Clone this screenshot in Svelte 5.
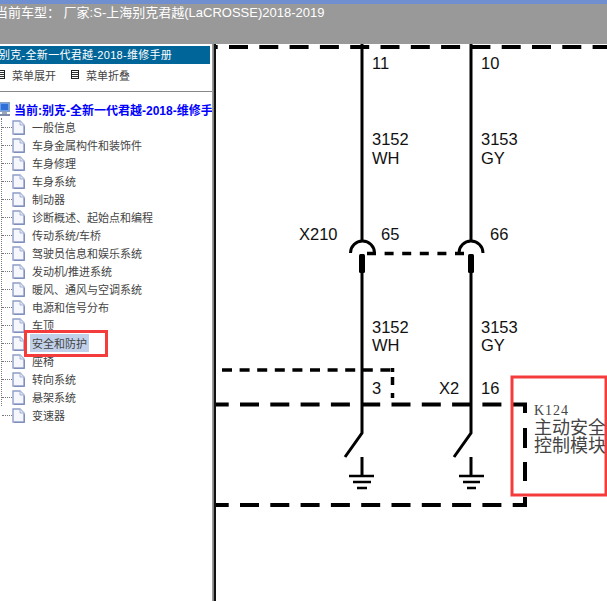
<script>
    const items = ['一般信息', '车身金属构件和装饰件', '车身修理', '车身系统', '制动器', '诊断概述、起始点和编程', '传动系统/车桥', '驾驶员信息和娱乐系统', '发动机/推进系统', '暖风、通风与空调系统', '电源和信号分布', '车顶', '安全和防护', '座椅', '转向系统', '悬架系统', '变速器'];
    const selected = '安全和防护';
</script>

<div class="window">
    <header>
        <p>当前车型： 厂家:S-上海别克君越(LaCROSSE)2018-2019</p>
    </header>
    <main>
        <aside>
            <div class="title">别克-全新一代君越-2018-维修手册</div>
            <div class="tools">
                <span class="tool"><i class="box"></i>菜单展开</span>
                <span class="tool"><i class="box"></i>菜单折叠</span>
            </div>
            <div class="current">
                <svg width="14" height="16" viewBox="0 0 14 16">
                    <rect x="2.500" y="1.500" width="10" height="9" fill="#6f9fe8" stroke="#8aa0c0"/>
                    <rect x="4" y="3" width="7" height="6" fill="#2f6fd8"/>
                    <path d="M5 11V13H10V11Z" fill="#9aa8b8"/>
                    <rect x="1" y="13" width="12" height="2" fill="#7a8aa8"/>
                </svg>
                <b>当前:别克-全新一代君越-2018-维修手册</b>
            </div>
            <ul>
                {#each items as item}
                    <li>
                        <span class="dots"></span>
                        <svg class="doc" width="13" height="15" viewBox="0 0 13 15">
                            <path d="M1 1H8L12 5V14H1Z" fill="#f5f7fd" stroke="#8f9dc8" stroke-width="1.400"/>
                            <path d="M8 1V5H12" fill="#dfe6f5" stroke="#a6b2d4"/>
                            <path d="M2 14.500H12.500V6" fill="none" stroke="#7f8fbc"/>
                        </svg>
                        <span class="label" class:selected={item === selected}>{item}</span>
                    </li>
                {/each}
            </ul>
            <div class="marker"></div>
        </aside>
        <div class="divider"></div>
        <section class="diagram">
            <svg width="391" height="557" viewBox="216 44 391 557">
                <g class="heavy" fill="none">
                    <path class="top" d="M216 47H607"/>
                    <path class="rail" d="M216 404.500H527"/>
                    <path class="rail" d="M216 505H527"/>
                </g>
                <path class="side" d="M525 403V413M525 428V448M525 462V481M525 497V507"/>
                <path class="small-dash" d="M222 370H392"/>
                <path class="side thin" d="M392.500 368V372M392.500 377V385M392.500 393V398"/>
                <path class="joint-dash" d="M367 253.500H464"/>
                <g class="wire" fill="none">
                    <path d="M362 44V241"/>
                    <path d="M471 44V241"/>
                    <path d="M362 272V433L345 457"/>
                    <path d="M471 272V433L454 457"/>
                    <path d="M362 457V476"/>
                    <path d="M471 457V476"/>
                    <path d="M350.500 253A12 12 0 0 1 374.500 253"/>
                    <path d="M459 253A12 12 0 0 1 483 253"/>
                    <path d="M349 476H374M353 482H371M357 488H367" stroke-width="2.500"/>
                    <path d="M459 476H484M463 482H480M467 488H476" stroke-width="2.500"/>
                </g>
                <rect x="359" y="254" width="6" height="19" rx="1.500"/>
                <rect x="468" y="254" width="6" height="19" rx="1.500"/>
                <g class="wiring-text">
                    <text x="372" y="69">11</text>
                    <text x="481" y="69">10</text>
                    <text x="372" y="145">3152</text>
                    <text x="372" y="164">WH</text>
                    <text x="481" y="145">3153</text>
                    <text x="481" y="164">GY</text>
                    <text x="299" y="240">X210</text>
                    <text x="381" y="240">65</text>
                    <text x="490" y="240">66</text>
                    <text x="372" y="333">3152</text>
                    <text x="372" y="351">WH</text>
                    <text x="481" y="333">3153</text>
                    <text x="481" y="351">GY</text>
                    <text x="372" y="394">3</text>
                    <text x="439" y="394">X2</text>
                    <text x="481" y="394">16</text>
                </g>
                <g class="module-text">
                    <text x="534" y="415" class="code">K124</text>
                    <text x="534" y="434">主动安全</text>
                    <text x="534" y="452">控制模块</text>
                </g>
                <rect class="red" x="512" y="377" width="94" height="118"/>
            </svg>
        </section>
    </main>
</div>

<style>
    :global(body) {
        margin: 0;
        background: #fff;
    }

    .window {
        width: 607px;
        height: 601px;
        overflow: hidden;
        font-family: "Liberation Sans", "Noto Sans CJK SC", sans-serif;
    }

    header {
        height: 40px;
        background: #999999;
        border-top: 4px solid #6f8fd0;
    }

    header p {
        margin: 0 0 0 -5px;
        font-size: 13px;
        line-height: 17px;
        color: #fff;
        white-space: nowrap;
    }

    main {
        display: flex;
        height: 557px;
    }

    aside {
        position: relative;
        width: 212px;
        flex: none;
        overflow: hidden;
    }

    .divider {
        width: 4px;
        flex: none;
        background: linear-gradient(90deg, #aaa, #777 50%, #111 50%);
    }

    .title {
        height: 18px;
        margin: 2px 2px 0 0;
        background: #006699;
        color: #fff;
        font-size: 11px;
        line-height: 18px;
        letter-spacing: .3px;
        text-indent: -1px;
        white-space: nowrap;
    }

    .tools {
        display: flex;
        gap: 15px;
        height: 27px;
        margin-left: -3px;
        border-bottom: 1px solid #888;
        font-size: 11px;
        color: #444;
    }

    .tool {
        display: flex;
        align-items: center;
        height: 21px;
        gap: 7px;
    }

    .box {
        width: 6px;
        height: 7px;
        border: 1px solid #222;
        background: repeating-linear-gradient(#fff 0 1px, #333 1px 2px);
    }

    .current {
        display: flex;
        align-items: center;
        gap: 3px;
        height: 18px;
        margin-top: 8px;
        margin-left: -3px;
        font-size: 12px;
        color: #0000ff;
        white-space: nowrap;
    }

    .current svg {
        flex: none;
    }

    ul {
        list-style: none;
        margin: 0 0 0 1px;
        padding: 0;
        border-left: 1px dotted #777;
        height: 288px;
    }

    li {
        display: flex;
        align-items: center;
        height: 18px;
        font-size: 11px;
        color: #444;
        white-space: nowrap;
    }

    .dots {
        width: 10px;
        border-top: 1px dotted #777;
    }

    .doc {
        flex: none;
        margin-right: 6px;
    }

    .label {
        padding: 1px 2px;
        margin-left: -1px;
    }

    .selected {
        background: #c1d1ea;
    }

    .marker {
        position: absolute;
        left: 24px;
        top: 286px;
        width: 78px;
        height: 21px;
        border: 3px solid #f53c3c;
    }

    .diagram {
        flex: 1;
        overflow: hidden;
    }

    .diagram svg {
        display: block;
    }

    .heavy path {
        stroke: #000;
        stroke-width: 4;
        stroke-dasharray: 19 11.300;
    }

    .heavy .top {
        stroke-dashoffset: 17.300;
    }

    .heavy .rail {
        stroke-dashoffset: 6.300;
    }

    .side {
        fill: none;
        stroke: #000;
        stroke-width: 4;
    }

    .side.thin {
        stroke-width: 3.500;
    }

    .small-dash {
        fill: none;
        stroke: #000;
        stroke-width: 3.500;
        stroke-dasharray: 10 7.600;
    }

    .joint-dash {
        fill: none;
        stroke: #000;
        stroke-width: 3.500;
        stroke-dasharray: 9 8.600;
    }

    .wire {
        stroke: #000;
        stroke-width: 3;
    }

    .wiring-text text {
        font-size: 16.500px;
        fill: #111;
    }

    .module-text text {
        font-family: "Liberation Serif", "Noto Sans CJK SC", serif;
        font-size: 18px;
        fill: #444;
    }

    .module-text .code {
        font-size: 14px;
        letter-spacing: 1px;
    }

    .red {
        fill: none;
        stroke: #f53c3c;
        stroke-width: 3;
    }
</style>
